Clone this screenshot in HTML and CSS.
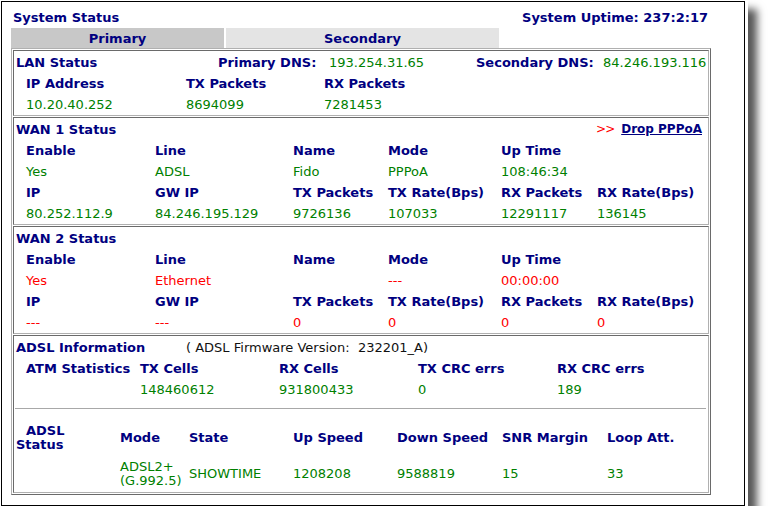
FILE: index.html
```html
<!DOCTYPE html>
<html>
<head>
<meta charset="utf-8">
<title>System Status</title>
<link rel="stylesheet" href="styles.css">
</head>
<body>
<div class="frame">
  <div class="header">
    <span class="h">System Status</span>
    <span class="h">System Uptime: 237:2:17</span>
  </div>
  <div class="tabs">
    <div class="tab tab-primary">Primary</div>
    <div class="tab tab-secondary">Secondary</div>
  </div>
  <div class="panel">
    <section class="cell">
      <div class="row lan-top">
        <span class="h">LAN Status</span>
        <span class="h">Primary DNS:</span>
        <span class="ok">193.254.31.65</span>
        <span class="h">Secondary DNS:</span>
        <span class="ok">84.246.193.116</span>
      </div>
      <div class="row lan-cols">
        <span class="h">IP Address</span><span class="h">TX Packets</span><span class="h">RX Packets</span>
      </div>
      <div class="row lan-cols">
        <span class="ok">10.20.40.252</span><span class="ok">8694099</span><span class="ok">7281453</span>
      </div>
    </section>

    <section class="cell">
      <div class="row title-row">
        <span class="h">WAN 1 Status</span>
        <span class="drop"><span class="arrows">&gt;&gt;</span><a class="drop-link" href="#">Drop PPPoA</a></span>
      </div>
      <div class="row wan-cols">
        <span class="h">Enable</span><span class="h">Line</span><span class="h">Name</span><span class="h">Mode</span><span class="h">Up Time</span><span></span>
      </div>
      <div class="row wan-cols">
        <span class="ok">Yes</span><span class="ok">ADSL</span><span class="ok">Fido</span><span class="ok">PPPoA</span><span class="ok">108:46:34</span><span></span>
      </div>
      <div class="row wan-cols">
        <span class="h">IP</span><span class="h">GW IP</span><span class="h">TX Packets</span><span class="h">TX Rate(Bps)</span><span class="h">RX Packets</span><span class="h">RX Rate(Bps)</span>
      </div>
      <div class="row wan-cols">
        <span class="ok">80.252.112.9</span><span class="ok">84.246.195.129</span><span class="ok">9726136</span><span class="ok">107033</span><span class="ok">12291117</span><span class="ok">136145</span>
      </div>
    </section>

    <section class="cell">
      <div class="row title-row">
        <span class="h">WAN 2 Status</span>
      </div>
      <div class="row wan-cols">
        <span class="h">Enable</span><span class="h">Line</span><span class="h">Name</span><span class="h">Mode</span><span class="h">Up Time</span><span></span>
      </div>
      <div class="row wan-cols">
        <span class="bad">Yes</span><span class="bad">Ethernet</span><span class="bad"></span><span class="bad">---</span><span class="bad">00:00:00</span><span></span>
      </div>
      <div class="row wan-cols">
        <span class="h">IP</span><span class="h">GW IP</span><span class="h">TX Packets</span><span class="h">TX Rate(Bps)</span><span class="h">RX Packets</span><span class="h">RX Rate(Bps)</span>
      </div>
      <div class="row wan-cols">
        <span class="bad">---</span><span class="bad">---</span><span class="bad">0</span><span class="bad">0</span><span class="bad">0</span><span class="bad">0</span>
      </div>
    </section>

    <section class="cell cell-adsl">
      <div class="row adsl-top">
        <span class="h">ADSL Information</span>
        <span class="plain">( ADSL Firmware Version:&nbsp; 232201_A)</span>
      </div>
      <div class="row atm-cols">
        <span class="h">ATM Statistics</span><span class="h">TX Cells</span><span class="h">RX Cells</span><span class="h">TX CRC errs</span><span class="h">RX CRC errs</span>
      </div>
      <div class="row atm-cols">
        <span></span><span class="ok">148460612</span><span class="ok">931800433</span><span class="ok">0</span><span class="ok">189</span>
      </div>
      <div class="rule"></div>
      <div class="status-grid">
        <span class="h status-label"><span class="indent">ADSL</span><br>Status</span>
        <span class="h">Mode</span><span class="h">State</span><span class="h">Up Speed</span><span class="h">Down Speed</span><span class="h">SNR Margin</span><span class="h">Loop Att.</span>
        <span></span>
        <span class="ok">ADSL2+<br>(G.992.5)</span><span class="ok">SHOWTIME</span><span class="ok">1208208</span><span class="ok">9588819</span><span class="ok">15</span><span class="ok">33</span>
      </div>
    </section>
  </div>
</div>
</body>
</html>
```

FILE: styles.css
```css
html, body {
  margin: 0;
  padding: 0;
  background: #fff;
}

body {
  font-family: "DejaVu Sans", Verdana, sans-serif;
  font-size: 13px;
  color: #000;
}

.frame {
  box-sizing: border-box;
  margin: 1px 0 0 1px;
  width: 744px;
  height: 505px;
  border: 1px solid #000;
  background: #fff;
  padding: 8px 0 0 9px;
  box-shadow: 0 0 0 3px #fff, 10px 10px 8px 2px rgba(0, 0, 0, 0.66);
}

.header {
  width: 700px;
  box-sizing: border-box;
  display: flex;
  justify-content: space-between;
  line-height: 16px;
  padding: 0 3px 0 2px;
  white-space: nowrap;
}

.h {
  font-weight: bold;
  color: #000080;
  white-space: nowrap;
}

.ok {
  color: #008000;
  white-space: nowrap;
}

.bad {
  color: #ff0000;
  white-space: nowrap;
}

.plain {
  color: #111;
  white-space: nowrap;
}

.tabs {
  display: flex;
  gap: 2px;
  margin-top: 2px;
  height: 20px;
}

.tab {
  font-weight: bold;
  color: #000080;
  text-align: center;
  line-height: 21px;
}

.tab-primary {
  width: 213px;
  background: #c8c8c8;
}

.tab-secondary {
  width: 273px;
  background: #e4e4e4;
}

.panel {
  box-sizing: border-box;
  width: 700px;
  border: 1px solid;
  border-color: #b0b0b0 #6a6a6a #6a6a6a #b0b0b0;
  padding: 1px;
  display: flex;
  flex-direction: column;
  gap: 1px;
}

.cell {
  border: 1px solid;
  border-color: #6a6a6a #b0b0b0 #b0b0b0 #6a6a6a;
  padding: 1px 2px 0 2px;
}

.row {
  line-height: 21px;
  height: 21px;
}

.lan-top {
  display: grid;
  grid-template-columns: 202px 111px 147px 127px 1fr;
}

.lan-cols {
  display: grid;
  padding-left: 10px;
  grid-template-columns: 160px 138px 1fr;
}

.title-row {
  display: flex;
  justify-content: space-between;
}

.drop {
  font-size: 12px;
  padding-right: 4px;
}

.arrows {
  color: #ff0000;
  margin-right: 7px;
  letter-spacing: -1px;
}

.drop-link {
  font-weight: bold;
  color: #000080;
  text-decoration: underline;
}

.wan-cols {
  display: grid;
  padding-left: 10px;
  grid-template-columns: 129px 138px 95px 113px 96px 1fr;
}

.adsl-top {
  display: grid;
  grid-template-columns: 170px 1fr;
}

.atm-cols {
  display: grid;
  padding-left: 10px;
  grid-template-columns: 114px 139px 139px 139px 1fr;
}

.rule {
  margin: 8px 0 0 -1px;
  border-top: 1px solid #a8a8a8;
}

.status-grid {
  display: grid;
  grid-template-columns: 104px 69px 104px 104px 105px 105px 1fr;
  grid-template-rows: 28px 28px;
  row-gap: 8px;
  align-items: center;
  line-height: 14px;
  padding: 15px 0 4px 0;
}

.status-label {
  line-height: 14px;
}

.indent {
  padding-left: 10px;
}
```
